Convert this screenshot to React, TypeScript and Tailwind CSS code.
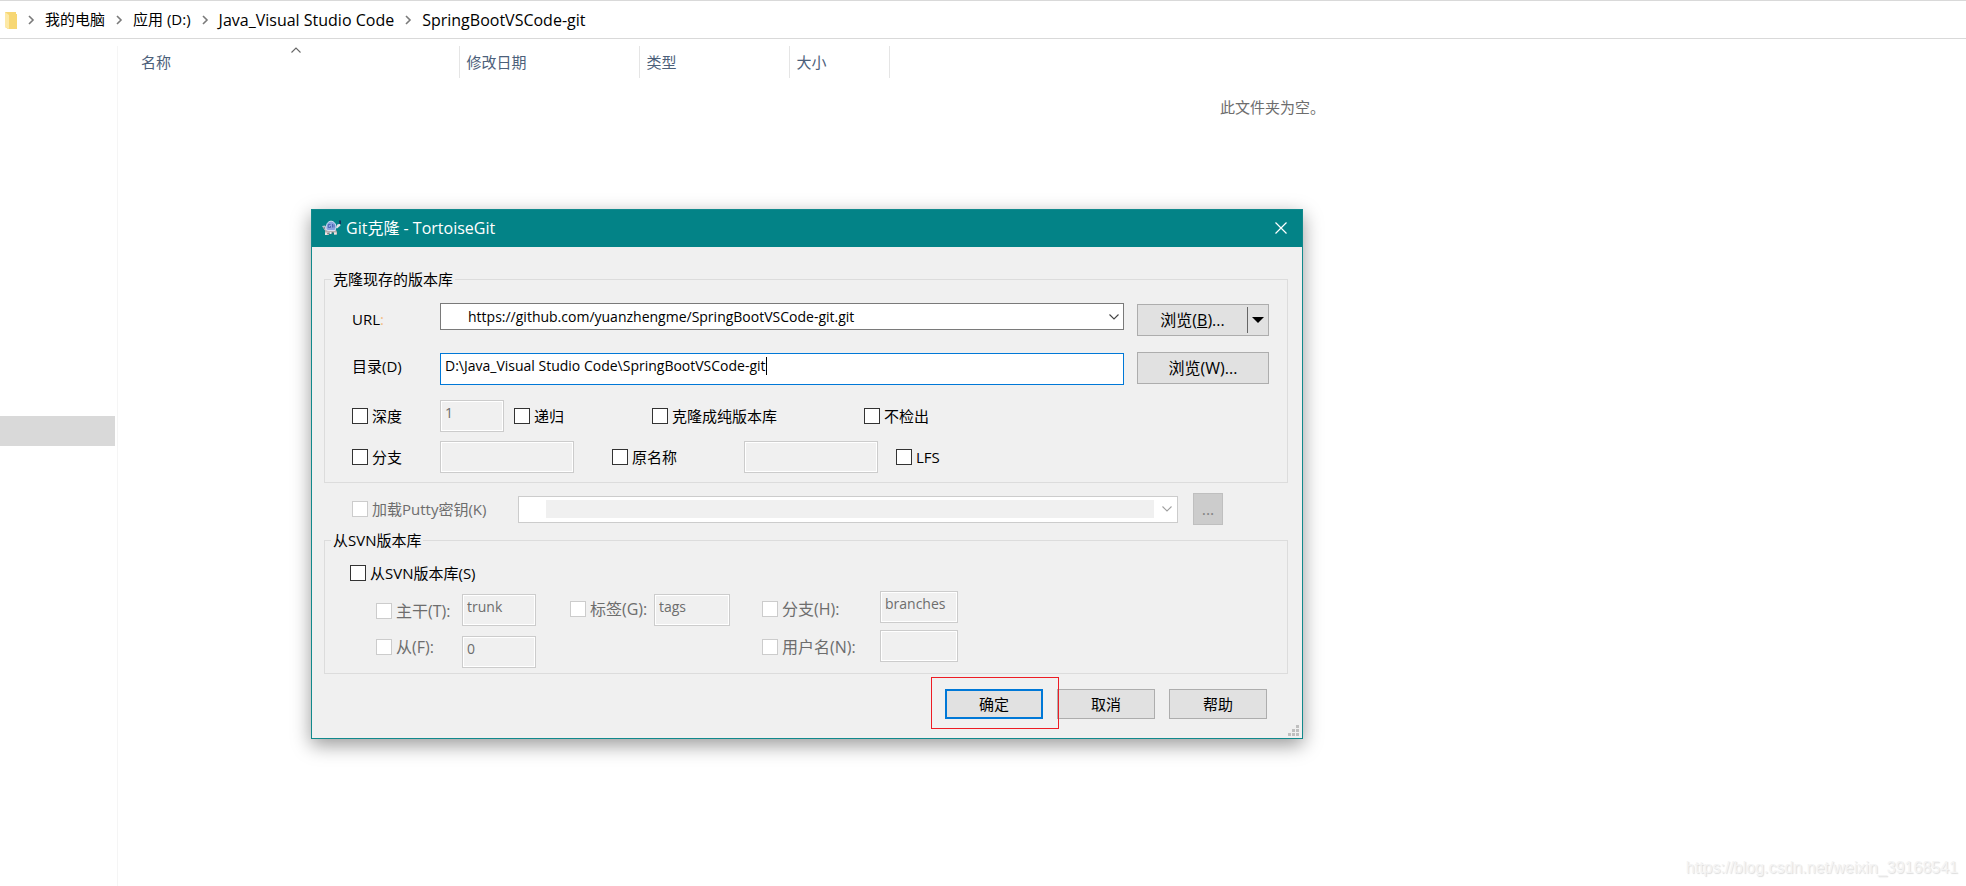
import type { ReactNode } from "react";

const crumbs = [
  { name: "我的电脑", size: "text-[15px]" },
  { name: "应用 (D:)", size: "text-[15px]" },
  { name: "Java_Visual Studio Code", size: "text-[16px]" },
  { name: "SpringBootVSCode-git", size: "text-[16px]" },
];

const fieldOff =
  "block h-8 rounded-none border border-[#cccccc] bg-[#f0f0f0] px-1 pb-2 text-[14px] text-[#6d6d6d] shadow-[inset_0_0_0_1px_#ffffff] outline-none";
const pushButton =
  "flex items-center justify-center border border-[#adadad] bg-[#e1e1e1] text-black";

function Crumb({ text, size }: { text: string; size: string }) {
  return (
    <li className="flex items-center">
      <svg className="mx-2.5 h-2.5 w-2" viewBox="0 0 8 10" fill="none" stroke="#7a7a7a" strokeWidth="1.6">
        <path d="M2 1l4 4-4 4" />
      </svg>
      <a href="#" className={`text-black ${size}`}>{text}</a>
    </li>
  );
}

function Check({ id, text, off = false }: { id: string; text: string; off?: boolean }) {
  return (
    <div className="flex h-5 items-center gap-1 whitespace-nowrap">
      <input
        id={id}
        type="checkbox"
        disabled={off}
        className="size-4 shrink-0 appearance-none border border-[#333333] bg-white disabled:border-[#cccccc]"
      />
      <label htmlFor={id} className={off ? "text-[#6d6d6d]" : "text-black"}>{text}</label>
    </div>
  );
}

function Group({ title, children }: { title: string; children: ReactNode }) {
  return (
    <fieldset className="ml-3 mr-3.5 border border-[#dcdcdc]">
      <legend className="ml-1.5 h-5 px-0.5 leading-5">{title}</legend>
      {children}
    </fieldset>
  );
}

function Chevron({ color }: { color: string }) {
  return (
    <svg className="pointer-events-none h-1.5 w-2.5" viewBox="0 0 10 6" fill="none" stroke={color} strokeWidth="1.1">
      <path d="M.5 .5L5 5 9.500 .5" />
    </svg>
  );
}

function Turtle() {
  return (
    <svg className="h-4 w-5" viewBox="0 0 20 16">
      <path d="M0 6l3-.5 2 2.500v2l-2 .5-1.500-2z" fill="#b9c4d0" />
      <path d="M3 10h11l1 2v2.500h-3V12.500H7V15H3z" fill="#b5aeb0" />
      <path d="M3 12.500h2.500V15H3zM7.500 12h2v2h-2zM12 12.500h2.500v2H12z" fill="#ece6e4" />
      <path d="M1.500 7.500h1.500v1H1.500zM5.500 13h1v1h-1zM10 12.500h1v1h-1z" fill="#5b5658" />
      <path d="M4 9.500C4 4 6 1.200 9 1.200S14 4 14 7.500l-1 3H6z" fill="#8ba3e0" stroke="#dfe6f8" strokeWidth=".9" />
      <path d="M8.500 4.500H6.300v3h2.200V6M10.500 4v3.500M12 4.500v3" fill="none" stroke="#3f59a8" strokeWidth=".8" />
      <path d="M14 7.500l1.500-3.200L18 4l.5 1.500-3.500 3z" fill="#e4e2e6" />
      <path d="M17 .5h2v3.500h-1.500z" fill="#16315c" />
    </svg>
  );
}

function CloneDialog() {
  return (
    <section
      role="dialog"
      aria-label="Git克隆 - TortoiseGit"
      className="absolute left-[311px] top-[209px] w-[992px] border border-[#11898c] bg-[#f0f0f0] font-['Open_Sans','Noto_Sans_CJK_SC',sans-serif] text-[15px] leading-5 text-black shadow-[0_6px_18px_rgba(0,0,0,0.4)]"
    >
      <header className="flex h-[37px] items-center bg-[#038387] pb-0.5 pl-2.5 pr-[15px] text-white">
        <Turtle />
        <h1 className="ml-1 flex-1 text-[16px]">Git克隆 - TortoiseGit</h1>
        <button aria-label="关闭">
          <svg className="size-3" viewBox="0 0 12 12" stroke="#ffffff" strokeWidth="1.2">
            <path d="M.5 .5l11 11M11.500 .5l-11 11" />
          </svg>
        </button>
      </header>

      <form className="pt-[22px]" onSubmit={(event) => event.preventDefault()}>
        <Group title="克隆现存的版本库">
          <div className="pb-[9px] pl-[27px] pr-[18px] pt-3.5">
            <div className="grid grid-cols-[88px_1fr_132px] items-start">
              <label htmlFor="url" className="leading-8">
                URL<span className="text-[#f3bd85]">:</span>
              </label>
              <div className="relative mr-[13px] h-[27px]">
                <select
                  id="url"
                  className="block size-full appearance-none border border-[#7a7a7a] bg-white pl-[27px] pr-6 text-[14px] outline-none"
                >
                  <option>https://github.com/yuanzhengme/SpringBootVSCode-git.git</option>
                </select>
                <div className="pointer-events-none absolute inset-y-0 right-[5px] flex items-center">
                  <Chevron color="#444444" />
                </div>
              </div>
              <div className="mt-px flex h-8 border border-[#adadad] bg-[#e1e1e1] text-[16px]">
                <button className="flex-1">
                  浏览(<u>B</u>)...
                </button>
                <button aria-label="更多" className="my-0.5 flex w-[21px] items-center justify-center border-l border-[#666666]">
                  <svg className="h-1.5 w-3" viewBox="0 0 12 6">
                    <path d="M0 0h12L6 6z" />
                  </svg>
                </button>
              </div>
            </div>

            <div className="mt-4 grid grid-cols-[88px_1fr_132px] items-start">
              <label htmlFor="folder" className="leading-7">目录(D)</label>
              <div className="mr-[13px] mt-px flex h-8 items-start border border-[#0078d7] bg-white pl-1 pt-0.5">
                <input
                  id="folder"
                  defaultValue="D:\Java_Visual Studio Code\SpringBootVSCode-git"
                  className="field-sizing-content h-5 text-[14px] outline-none"
                />
                <span className="mt-px h-[18px] w-px bg-black" />
              </div>
              <button className={`${pushButton} h-8 text-[16px]`}>浏览(W)...</button>
            </div>

            <div className="mt-[15px] flex items-center">
              <div className="w-[88px]"><Check id="depth" text="深度" /></div>
              <input aria-label="深度" disabled defaultValue="1" className={`${fieldOff} w-16`} />
              <div className="ml-2.5 w-[138px]"><Check id="recursive" text="递归" /></div>
              <div className="w-[212px]"><Check id="bare" text="克隆成纯版本库" /></div>
              <Check id="nocheckout" text="不检出" />
            </div>

            <div className="mt-[9px] flex items-center">
              <div className="w-[88px]"><Check id="branch" text="分支" /></div>
              <input aria-label="分支" disabled className={`${fieldOff} w-[134px]`} />
              <div className="ml-[38px] w-[132px]"><Check id="origin" text="原名称" /></div>
              <input aria-label="原名称" disabled className={`${fieldOff} w-[134px]`} />
              <div className="ml-[18px]"><Check id="lfs" text="LFS" /></div>
            </div>
          </div>
        </Group>

        <div className="mt-2.5 flex items-center pl-10">
          <div className="w-[166px]"><Check id="putty" text="加载Putty密钥(K)" off /></div>
          <div className="flex h-[27px] w-[660px] items-center border border-[#cccccc] bg-white pl-[27px] pr-[5px]">
            <select aria-label="Putty密钥" disabled className="mr-2 h-[18px] flex-1 appearance-none bg-[#f0f0f0]" />
            <Chevron color="#a0a0a0" />
          </div>
          <button
            disabled
            aria-label="选择密钥"
            className="ml-[15px] h-8 w-[30px] border border-[#bfbfbf] bg-[#cccccc] text-[16px] text-[#838383]"
          >
            ...
          </button>
        </div>

        <div className="mt-[5px]">
          <Group title="从SVN版本库">
            <div className="pb-[5px] pl-[25px] pt-[13px]">
              <Check id="svn" text="从SVN版本库(S)" />
              <div className="mt-2 flex items-start pl-[26px] text-[16px]">
                <div className="flex w-[86px] flex-col gap-4 pt-2.5">
                  <Check id="trunk" text="主干(T):" off />
                  <Check id="from" text="从(F):" off />
                </div>
                <div className="flex flex-col gap-2.5 pt-[3px]">
                  <input aria-label="主干" disabled defaultValue="trunk" className={`${fieldOff} w-[74px]`} />
                  <input aria-label="从" disabled defaultValue="0" className={`${fieldOff} w-[74px]`} />
                </div>
                <div className="ml-[34px] w-[84px] pt-2"><Check id="tags" text="标签(G):" off /></div>
                <div className="pt-[3px]">
                  <input aria-label="标签" disabled defaultValue="tags" className={`${fieldOff} w-[76px]`} />
                </div>
                <div className="ml-8 flex w-[118px] flex-col gap-[18px] pt-2">
                  <Check id="branches" text="分支(H):" off />
                  <Check id="user" text="用户名(N):" off />
                </div>
                <div className="flex flex-col gap-[7px]">
                  <input aria-label="分支目录" disabled defaultValue="branches" className={`${fieldOff} w-[78px]`} />
                  <input aria-label="用户名" disabled className={`${fieldOff} w-[78px]`} />
                </div>
              </div>
            </div>
          </Group>
        </div>

        <footer className="relative mt-[15px] flex justify-end gap-3.5 pb-[19px] pr-[35px]">
          <div className="relative">
            <button className="h-[30px] w-[98px] border-2 border-[#0078d7] bg-[#e1e1e1]">确定</button>
            <div className="pointer-events-none absolute -left-3.5 -top-3 z-10 h-[52px] w-32 border border-[#ed1c24]" />
          </div>
          <button className={`${pushButton} h-[30px] w-[98px]`}>取消</button>
          <button className={`${pushButton} h-[30px] w-[98px]`}>帮助</button>
          <svg className="absolute bottom-0.5 right-[3px] size-[11px]" viewBox="0 0 11 11" fill="#bfbfbf">
            <path d="M8 0h3v3H8zM4 4h3v3H4zM8 4h3v3H8zM0 8h3v3H0zM4 8h3v3H4zM8 8h3v3H8z" />
          </svg>
        </footer>
      </form>
    </section>
  );
}

export default function App() {
  return (
    <main className="relative flex min-h-screen flex-col overflow-hidden bg-white font-['Open_Sans','Noto_Sans_CJK_SC',sans-serif] text-[15px]">
      <nav className="flex h-[39px] items-center border-y border-[#d9d9d9] pl-[5px]">
        <svg className="h-[18px] w-3" viewBox="0 0 12 18">
          <path d="M0 1h11v2h1v15H3L0 16z" fill="#f7d774" />
          <path d="M0 1l4 3v14l-4-2z" fill="#fde9a6" />
        </svg>
        <ol className="flex">
          {crumbs.map((crumb) => <Crumb key={crumb.name} text={crumb.name} size={crumb.size} />)}
        </ol>
      </nav>

      <div className="flex flex-1 pt-[7px]">
        <aside className="w-[118px] shrink-0 border-r border-[#f5f5f5] pt-[370px]">
          <div className="h-[30px] w-[115px] bg-[#d9d9d9]" />
        </aside>
        <div className="flex-1">
          <table className="table-fixed border-collapse text-left text-[#4c607a]">
            <thead>
              <tr className="h-8">
                <th scope="col" className="relative w-[341px] border-r border-[#e5e5e5] p-0 pl-[23px] font-normal">
                  名称
                  <svg className="absolute left-[173px] top-px h-1.5 w-2.5" viewBox="0 0 10 6" fill="none" stroke="#666666" strokeWidth="1.1">
                    <path d="M.5 5.500L5 1l4.500 4.500" />
                  </svg>
                </th>
                <th scope="col" className="w-[180px] border-r border-[#e5e5e5] p-0 pl-[7px] font-normal">修改日期</th>
                <th scope="col" className="w-[150px] border-r border-[#e5e5e5] p-0 pl-[7px] font-normal">类型</th>
                <th scope="col" className="w-[100px] border-r border-[#e5e5e5] p-0 pl-[7px] font-normal">大小</th>
              </tr>
            </thead>
          </table>
          <p className="mt-[18px] pl-[1102px] text-[#6d6d6d]">此文件夹为空。</p>
        </div>
      </div>

      <CloneDialog />
      <p className="absolute bottom-1.5 right-2 font-['Liberation_Sans',sans-serif] text-[16px] text-[#f4f4f4] [text-shadow:1px_1px_1px_#dddddd]">
        https://blog.csdn.net/weixin_39168541
      </p>
    </main>
  );
}
